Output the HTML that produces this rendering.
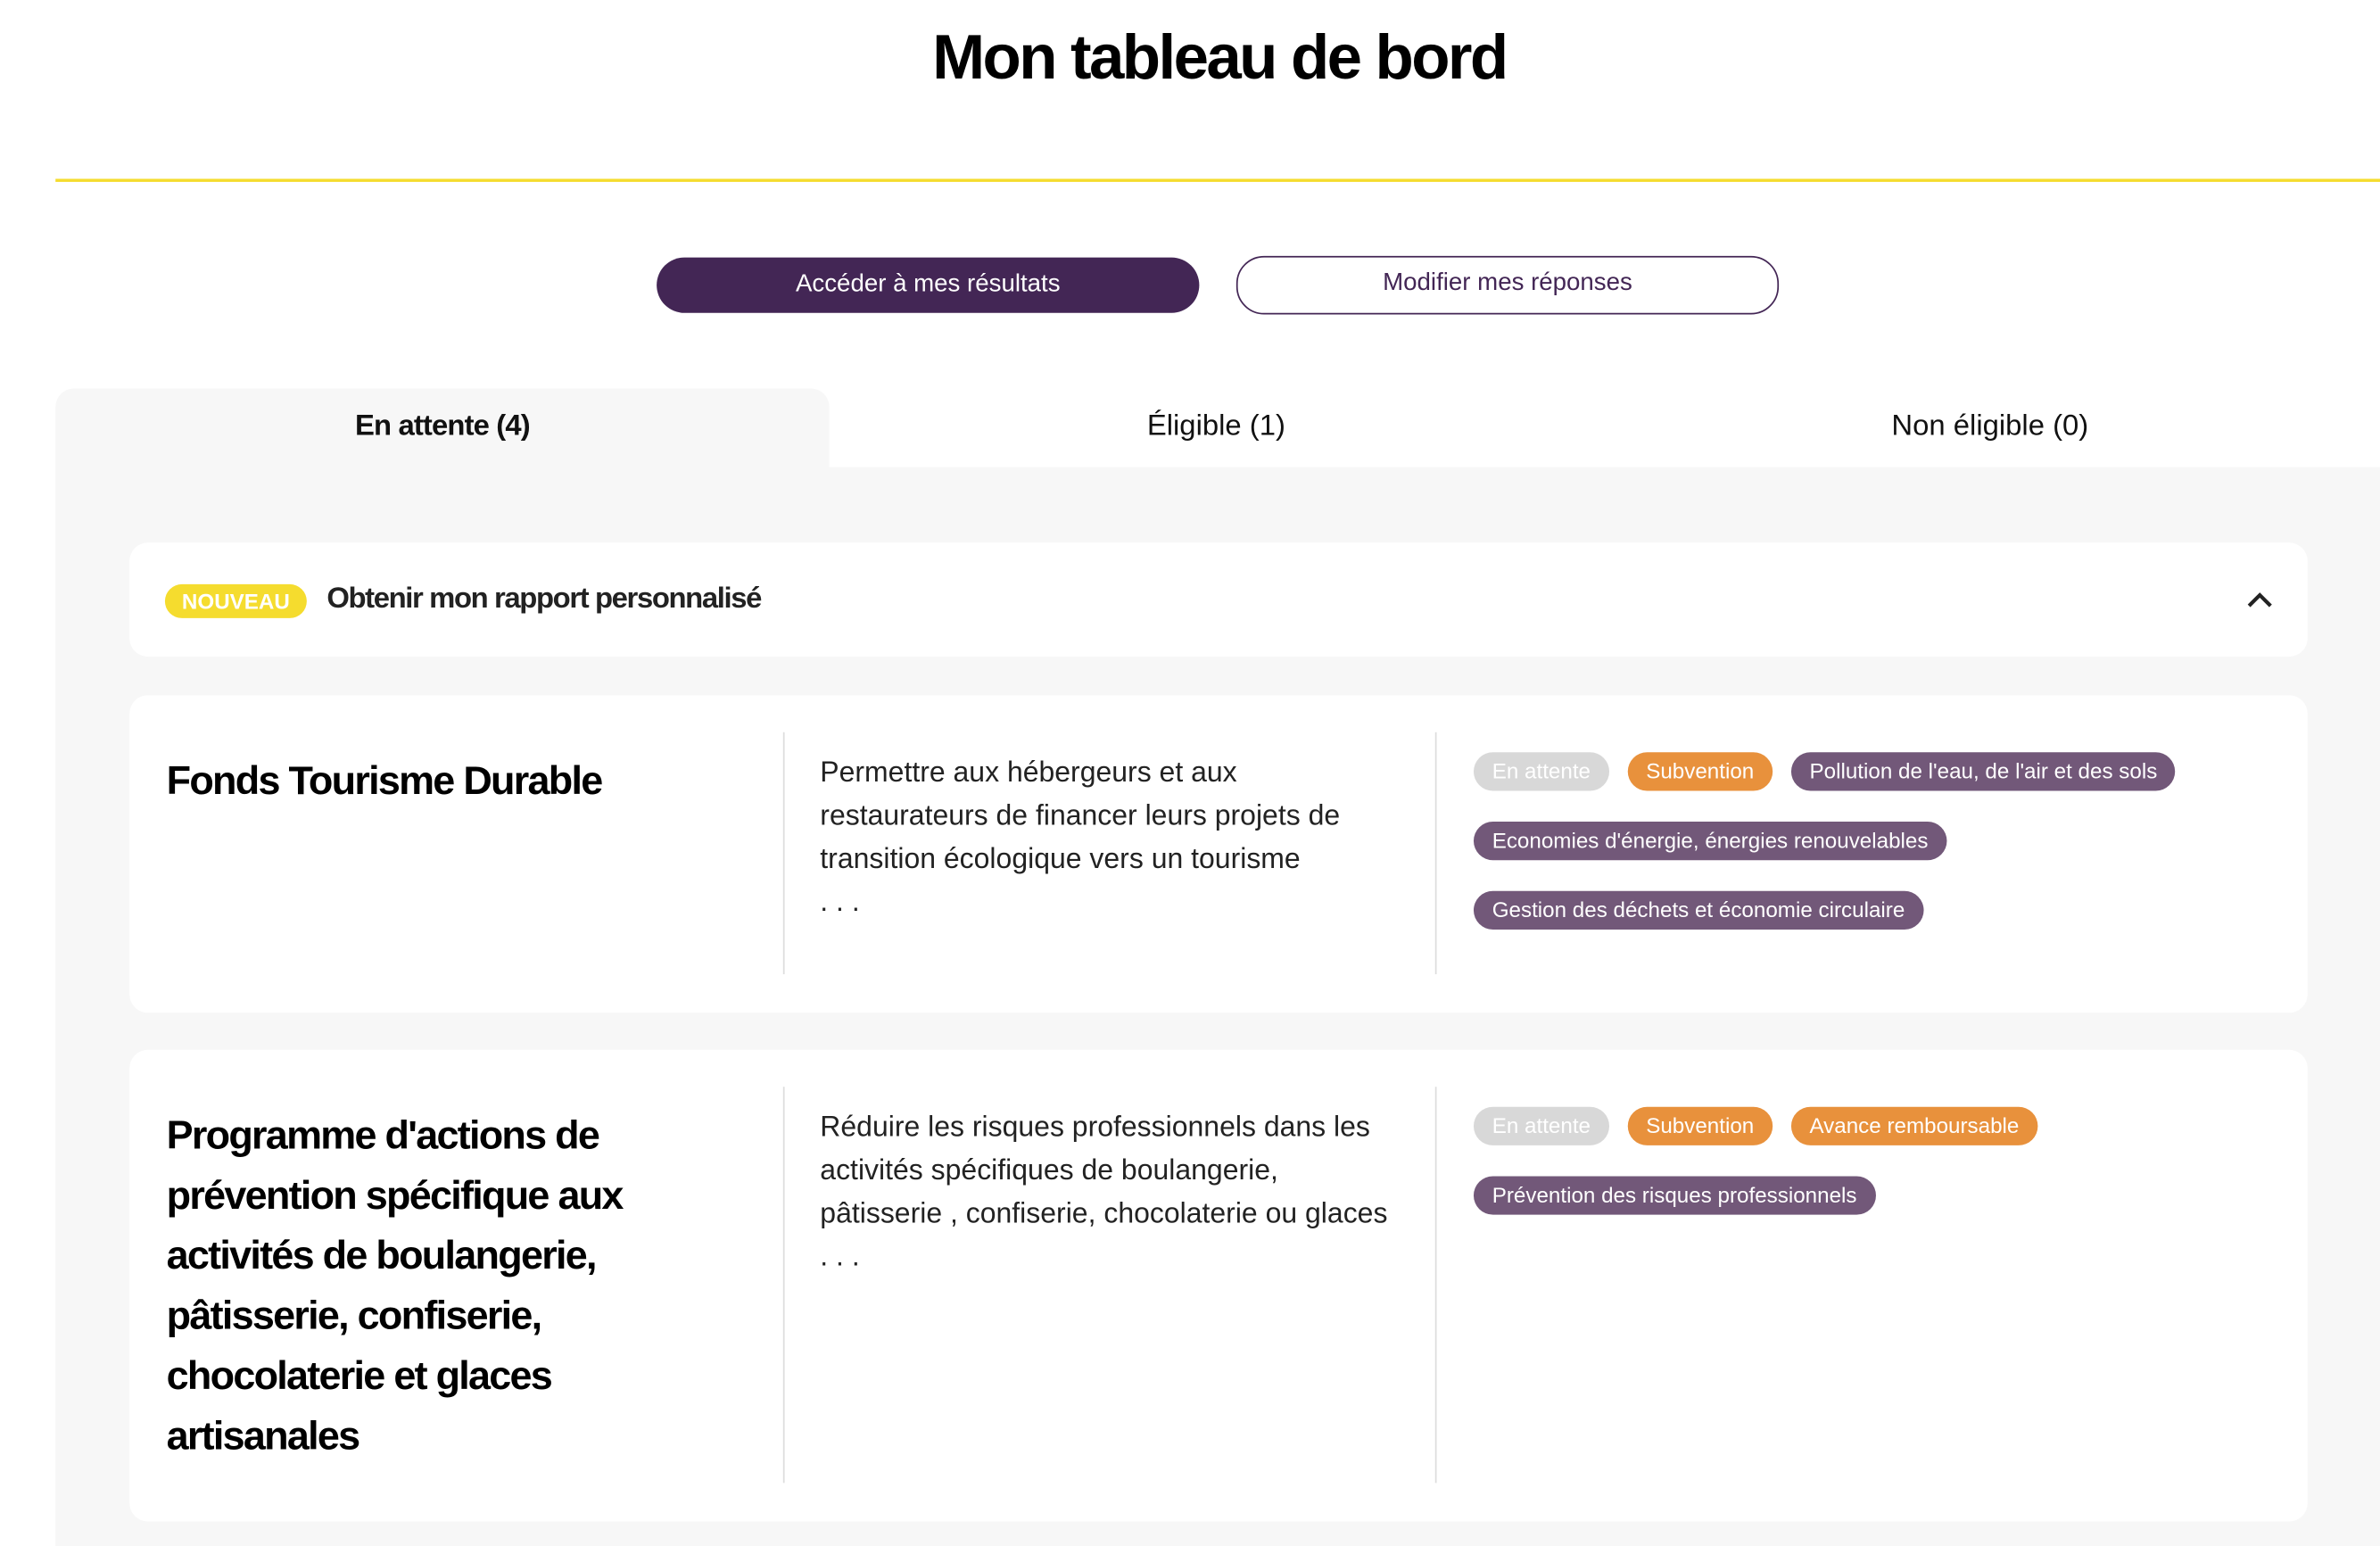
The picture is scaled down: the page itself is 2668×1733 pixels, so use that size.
<!DOCTYPE html>
<html><head><meta charset="utf-8"><style>
html,body{margin:0;padding:0;background:#fff;width:2668px;height:1698px;overflow:hidden}
#w{position:absolute;left:0;top:0;width:1544px;height:983px;transform:scale(1.728);transform-origin:0 0;font-family:"Liberation Sans",sans-serif;color:#111}
.abs{position:absolute}
h1{position:absolute;left:0;width:1582px;top:14px;margin:0;text-align:center;font-size:41px;font-weight:bold;letter-spacing:-1.5px;color:#000}
.line{left:36px;top:116px;width:1508px;height:2px;background:#f5dc2e}
.btn{top:167px;height:36px;width:352px;border-radius:18px;box-sizing:border-box;text-align:center;line-height:36px;font-size:16px}
.b1{left:426px;background:#432655;color:#fff}
.b2{left:802px;border:1.5px solid #432655;color:#432655;line-height:34px;top:166px;height:38px}
.panel{left:36px;top:303px;width:1508px;height:700px;background:#f7f7f7}
.tabA{left:36px;top:252px;width:502px;height:52px;background:#f7f7f7;border-radius:12px 12px 0 0}
.tab{top:266px;font-size:19px;text-align:center;width:502px}
.card{background:#fff;border-radius:12px;left:84px;width:1413px}
.pill{height:25px;line-height:25px;border-radius:13px;padding:0 12px;font-size:14px;color:#fff;display:inline-block;margin-right:12px;white-space:nowrap}
.g{background:#d8d8d8}.o{background:#e8913c}.p{background:#725879}
.vl{width:1px;background:#ddd}
.t{font-weight:bold;font-size:26px;letter-spacing:-1px;line-height:39px;color:#000}
.d{font-size:18.5px;line-height:28px;color:#222}
</style></head><body><div id="w">
<h1>Mon tableau de bord</h1>
<div class="abs line"></div>
<div class="abs btn b1">Accéder à mes résultats</div>
<div class="abs btn b2">Modifier mes réponses</div>
<div class="abs tabA"></div>
<div class="abs panel"></div>
<div class="abs tab" style="left:36px;font-weight:bold;letter-spacing:-0.5px">En attente (4)</div>
<div class="abs tab" style="left:538px">Éligible (1)</div>
<div class="abs tab" style="left:1040px">Non éligible (0)</div>

<div class="abs card" style="top:352px;height:74px"></div>
<div class="abs pill" style="left:107px;top:379px;height:22px;line-height:22px;background:#f5dc2e;font-weight:bold;padding:0 11px">NOUVEAU</div>
<div class="abs" style="left:212px;top:378px;font-size:19px;font-weight:bold;letter-spacing:-0.8px;color:#222">Obtenir mon rapport personnalisé</div>
<svg class="abs" style="left:1457px;top:382px" width="18" height="14" viewBox="0 0 18 14"><path d="M2 11L9 4L16 11" fill="none" stroke="#222" stroke-width="2.4"/></svg>

<div class="abs card" style="top:451px;height:206px"></div>
<div class="abs t" style="left:108px;top:487px">Fonds Tourisme Durable</div>
<div class="abs vl" style="left:508px;top:475px;height:157px"></div>
<div class="abs vl" style="left:931px;top:475px;height:157px"></div>
<div class="abs d" style="left:532px;top:487px;width:375px">Permettre aux hébergeurs et aux restaurateurs de financer leurs projets de transition écologique vers un tourisme<br>. . .</div>
<div class="abs" style="left:956px;top:488px;width:540px">
<div><span class="pill g">En attente</span><span class="pill o">Subvention</span><span class="pill p">Pollution de l'eau, de l'air et des sols</span></div>
<div style="margin-top:20px"><span class="pill p">Economies d'énergie, énergies renouvelables</span></div>
<div style="margin-top:20px"><span class="pill p">Gestion des déchets et économie circulaire</span></div>
</div>

<div class="abs card" style="top:681px;height:306px"></div>
<div class="abs t" style="left:108px;top:717px;width:330px">Programme d'actions de prévention spécifique aux activités de boulangerie, pâtisserie, confiserie, chocolaterie et glaces artisanales</div>
<div class="abs vl" style="left:508px;top:705px;height:257px"></div>
<div class="abs vl" style="left:931px;top:705px;height:257px"></div>
<div class="abs d" style="left:532px;top:717px;width:385px">Réduire les risques professionnels dans les activités spécifiques de boulangerie,<br>pâtisserie , confiserie, chocolaterie ou glaces<br>. . .</div>
<div class="abs" style="left:956px;top:718px;width:540px">
<div><span class="pill g">En attente</span><span class="pill o">Subvention</span><span class="pill o">Avance remboursable</span></div>
<div style="margin-top:20px"><span class="pill p">Prévention des risques professionnels</span></div>
</div>
</div></body></html>
